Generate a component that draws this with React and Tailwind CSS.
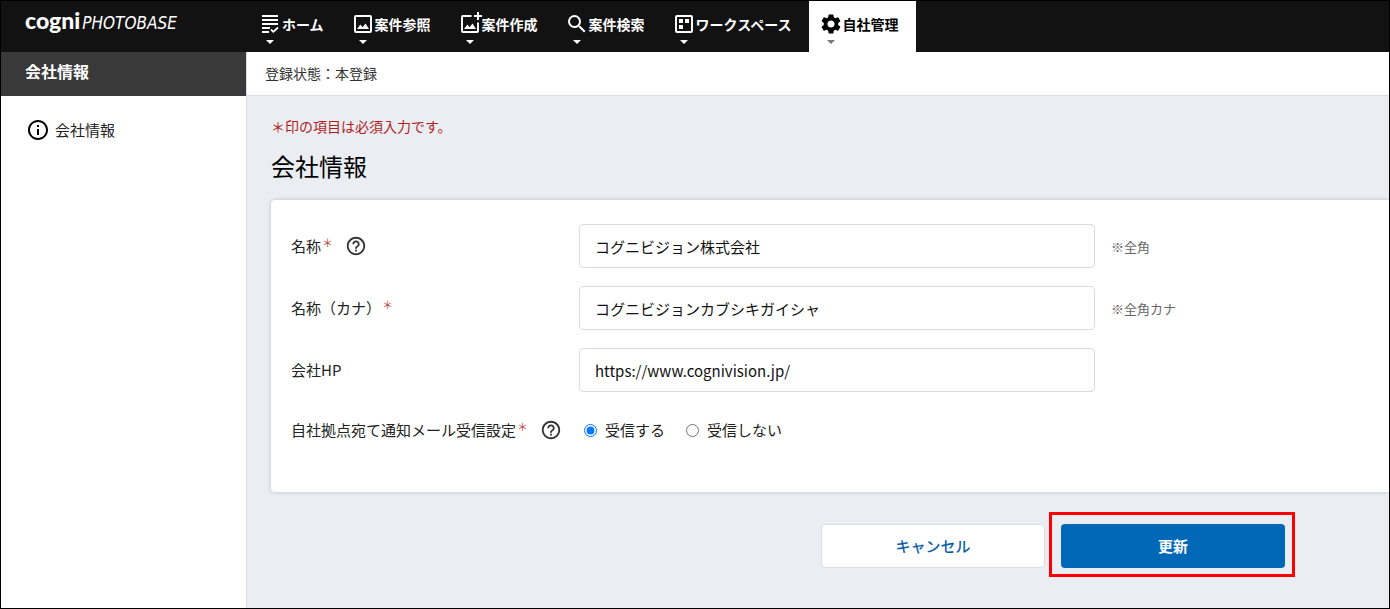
import { useState } from 'react';
import clsx from 'clsx';
import { MdHelpOutline, MdInfoOutline } from 'react-icons/md';

function HomeIcon() {
  return (
    <>
      <path d="M4 4h16M4 8h16M4 12h16M4 16h8M4 20h7" stroke="currentColor" strokeWidth="1.8" fill="none" />
      <path d="M13 17.5l2.3 2.3 4.7-4.3" stroke="currentColor" strokeWidth="1.8" fill="none" />
    </>
  );
}

function ImageIcon() {
  return (
    <>
      <rect x="4" y="4" width="16" height="16" rx="1" stroke="currentColor" strokeWidth="2" fill="none" />
      <path d="M6 17l3.4-4.4 2.2 2.6 2.9-3.6L18 17z" fill="currentColor" />
    </>
  );
}

function ImageAddIcon() {
  return (
    <>
      <path d="M13.5 4H5a1 1 0 0 0-1 1v14a1 1 0 0 0 1 1h14a1 1 0 0 0 1-1v-8.500" stroke="currentColor" strokeWidth="2" fill="none" />
      <path d="M20 0v8M16 4h8" stroke="currentColor" strokeWidth="2" fill="none" />
      <path d="M6 17l3.400-4.400 2.200 2.600 2.900-3.600L18 17z" fill="currentColor" />
    </>
  );
}

function SearchIcon() {
  return (
    <path
      d="M15.500 14h-.79l-.28-.27A6.471 6.471 0 0 0 16 9.500 6.500 6.500 0 1 0 9.500 16c1.610 0 3.090-.59 4.230-1.570l.27.28v.79l5 4.990L20.490 19l-4.990-5zm-6 0C7.010 14 5 11.990 5 9.500S7.010 5 9.500 5 14 7.010 14 9.500 11.990 14 9.500 14z"
      fill="currentColor"
    />
  );
}

function WorkspaceIcon() {
  return (
    <>
      <rect x="4" y="4" width="16" height="16" rx="1" stroke="currentColor" strokeWidth="2" fill="none" />
      <path d="M7 7h4v4H7zM13 7h4v4h-4zM7 13h4v4H7z" fill="currentColor" />
    </>
  );
}

function GearIcon() {
  return (
    <path
      d="M19.140 12.940c.04-.3.06-.61.06-.94 0-.32-.02-.64-.07-.94l2.030-1.580a.49.49 0 0 0 .12-.61l-1.920-3.320a.488.488 0 0 0-.59-.22l-2.390.96c-.5-.38-1.030-.7-1.620-.94l-.36-2.540a.484.484 0 0 0-.48-.41h-3.840c-.24 0-.43.17-.47.41l-.36 2.540c-.59.24-1.130.57-1.620.94l-2.390-.96c-.22-.08-.47 0-.59.22L2.740 8.870c-.12.21-.08.47.12.61l2.030 1.580c-.05.3-.09.63-.09.94s.02.64.07.94l-2.030 1.580a.49.49 0 0 0-.12.61l1.920 3.320c.12.22.37.29.59.22l2.390-.96c.5.38 1.030.7 1.620.94l.36 2.540c.05.24.24.41.48.41h3.840c.24 0 .44-.17.47-.41l.36-2.540c.59-.24 1.130-.56 1.620-.94l2.390.96c.22.08.47 0 .59-.22l1.920-3.320c.12-.22.07-.47-.12-.61l-2.010-1.580zM12 15.600c-1.980 0-3.600-1.620-3.600-3.600s1.620-3.600 3.600-3.600 3.600 1.620 3.600 3.600-1.620 3.600-3.600 3.600z"
      fill="currentColor"
    />
  );
}

const NAV = [
  { label: 'ホーム', Icon: HomeIcon },
  { label: '案件参照', Icon: ImageIcon },
  { label: '案件作成', Icon: ImageAddIcon },
  { label: '案件検索', Icon: SearchIcon },
  { label: 'ワークスペース', Icon: WorkspaceIcon },
  { label: '自社管理', Icon: GearIcon, active: true },
];

function NavItem({ label, Icon, active }) {
  return (
    <a
      href="#"
      aria-current={active ? 'page' : undefined}
      className={clsx('flex h-full items-start gap-px pl-[11px] pr-[17px]', active ? 'bg-white text-black' : 'text-white')}
    >
      <span className="flex w-[22px] flex-col items-center pt-3">
        <svg viewBox="1 1 22 22" className="h-[22px] w-[22px] overflow-visible">
          <Icon />
        </svg>
        <svg viewBox="0 0 8 4" className={clsx('mt-[5px] h-1 w-2', active && 'text-[#777]')}>
          <path d="M0 0h8L4 4z" fill="currentColor" />
        </svg>
      </span>
      <span className="pt-[11px] text-[14px] leading-6 font-bold whitespace-nowrap">{label}</span>
    </a>
  );
}

function Header() {
  return (
    <header className="flex h-[51px] bg-[#121212]">
      <a href="#" className="flex w-[247px] shrink-0 items-baseline gap-0.5 pl-6 text-white">
        <span className="font-[Lato,sans-serif] text-[23px] leading-[38px] font-black">cogni</span>
        <span className="font-['DejaVu_Sans_Condensed','DejaVu_Sans',sans-serif] text-[17px] italic">PHOTOBASE</span>
      </a>
      <nav className="flex">
        {NAV.map((item) => (
          <NavItem key={item.label} {...item} />
        ))}
      </nav>
    </header>
  );
}

function Sidebar() {
  return (
    <aside className="w-[246px] shrink-0 border-r border-[#d9dce1] bg-white">
      <h2 className="h-11 bg-[#393939] pl-6 text-[16px] leading-[38px] font-bold text-white">会社情報</h2>
      <a href="#" className="mt-[22px] flex items-center gap-[5px] pl-[25px] text-[15px] leading-6 text-[#222]">
        <MdInfoOutline className="h-6 w-6 text-black" />
        会社情報
      </a>
    </aside>
  );
}

function Label({ text, required, help, htmlFor, id }) {
  return (
    <div className="flex w-72 shrink-0 items-center text-[15px] leading-6 text-[#222]">
      <label htmlFor={htmlFor} id={id} className="flex">
        {text}
        {required && <span className="ml-px text-[11px] leading-4 text-[#b8423c]">＊</span>}
      </label>
      {help && (
        <button type="button" aria-label="ヘルプ" className="ml-3 text-[#333]">
          <MdHelpOutline className="h-[22px] w-[22px]" />
        </button>
      )}
    </div>
  );
}

function TextRow({ id, label, value, hint, required, help }) {
  const [text, setText] = useState(value);
  return (
    <div className="flex items-center">
      <Label text={label} required={required} help={help} htmlFor={id} />
      <input
        id={id}
        type="text"
        value={text}
        onChange={(e) => setText(e.target.value)}
        className="h-11 w-[516px] rounded border border-[#d9dbe2] bg-white px-[15px] text-[15px] text-[#111]"
      />
      {hint && <span className="ml-4 pt-0.5 text-[13px] leading-5 text-[#666]">{hint}</span>}
    </div>
  );
}

function RadioRow() {
  const [receive, setReceive] = useState(true);
  return (
    <div className="flex h-10 items-center" role="radiogroup" aria-labelledby="mail-label">
      <Label id="mail-label" text="自社拠点宛て通知メール受信設定" required help />
      <div className="flex gap-[21px] pl-[5px] text-[15px] leading-6 text-[#222]">
        <label className="flex items-center gap-2">
          <input type="radio" name="mail" className="h-[13px] w-[13px]" checked={receive} onChange={() => setReceive(true)} />
          受信する
        </label>
        <label className="flex items-center gap-2">
          <input type="radio" name="mail" className="h-[13px] w-[13px]" checked={!receive} onChange={() => setReceive(false)} />
          受信しない
        </label>
      </div>
    </div>
  );
}

export default function App() {
  return (
    <div className="flex min-h-screen flex-col border border-black bg-[#eaedf2] font-['Noto_Sans_CJK_JP',sans-serif]">
      <Header />
      <div className="flex grow">
        <Sidebar />
        <main className="min-w-0 grow">
          <div className="h-11 border-b border-[#d9dce1] bg-white pl-[18px] text-[14px] leading-[43px] text-[#333]">
            登録状態：本登録
          </div>
          <div className="pl-6">
            <p className="pt-[18px] text-[14px] leading-6 text-[#b01c1c]">＊印の項目は必須入力です。</p>
            <h1 className="mt-2.5 text-[24px] leading-9 font-normal text-black">会社情報</h1>
            <form onSubmit={(e) => e.preventDefault()}>
              <div className="mt-4 flex flex-col gap-[18px] rounded-l bg-white pt-6 pr-6 pb-[42px] pl-5 shadow-[0_0_4px_rgba(0,0,0,0.2)]">
                <TextRow id="name" label="名称" value="コグニビジョン株式会社" hint="※全角" required help />
                <TextRow id="kana" label="名称（カナ）" value="コグニビジョンカブシキガイシャ" hint="※全角カナ" required />
                <TextRow id="hp" label="会社HP" value="https://www.cognivision.jp/" />
                <RadioRow />
              </div>
              <div className="mt-8 flex justify-end gap-4 pr-[104px] pb-10">
                <button type="button" className="h-11 w-56 rounded border border-[#d9dce1] bg-white text-[15px] font-medium text-[#0a5fae]">
                  キャンセル
                </button>
                <div className="relative">
                  <button type="submit" className="h-11 w-56 rounded bg-[#0068b7] text-[15px] font-bold text-white">
                    更新
                  </button>
                  <div className="pointer-events-none absolute -top-3 -right-2.5 -bottom-[9px] -left-3 border-[3px] border-[#f00]" />
                </div>
              </div>
            </form>
          </div>
        </main>
      </div>
    </div>
  );
}
